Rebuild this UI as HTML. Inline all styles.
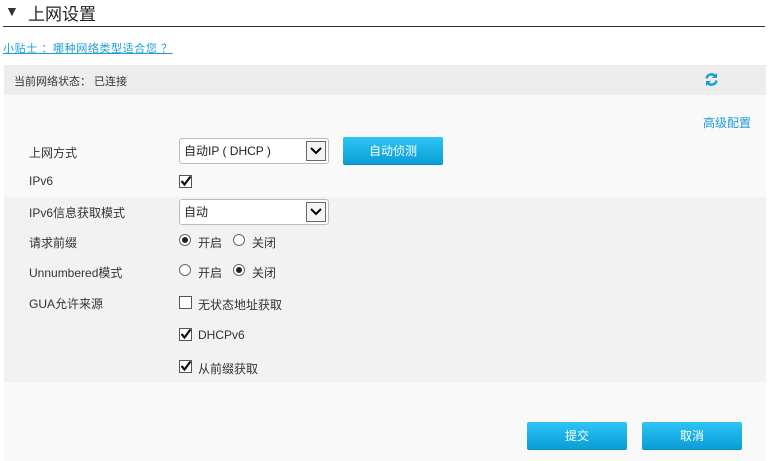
<!DOCTYPE html>
<html><head><meta charset="utf-8"><style>
*{margin:0;padding:0;box-sizing:border-box}
body{width:770px;height:461px;background:#fff;font-family:"Liberation Sans","Noto Sans CJK SC",sans-serif;font-size:12px;color:#333;position:relative;overflow:hidden}
.a{position:absolute;white-space:nowrap}
.sel{position:absolute;height:26px;border:1px solid #bbb;border-radius:3px;background:#fff;padding-left:4px;line-height:24px;font-size:12px;color:#222}
.sel .ar{position:absolute;right:2px;top:2px;width:20px;height:20px;border:1px solid #666;background:#f4f4f4}
.btn{position:absolute;height:28px;width:100px;border-radius:2px;background:linear-gradient(#2ec4f4,#0a9ed6);color:#fff;text-align:center;line-height:28px;font-size:12px;border-bottom:1px solid #0a8fc0}
.cb{position:absolute;width:13px;height:13px;border:1px solid #555;background:#fff}
.rd{position:absolute;width:12px;height:12px;border:1px solid #666;border-radius:50%;background:#fff}
.rd.on::after{content:"";position:absolute;left:2px;top:2px;width:6px;height:6px;border-radius:50%;background:#222}
</style></head><body>
<div class="a" style="left:5px;top:3px;font-size:14px">▼</div>
<div class="a" style="left:28px;top:0px;font-size:17px;color:#222">上网设置</div>
<div class="a" style="left:3px;top:26px;width:762px;height:1px;background:#333"></div>
<div class="a" style="left:3px;top:40px;color:#1a9cd8;text-decoration:underline;font-size:11px;letter-spacing:0.6px">小贴士 ：哪种网络类型适合您 ？</div>
<div class="a" style="left:4px;top:65px;width:762px;height:30px;background:#ededed"></div>
<div class="a" style="left:14px;top:73px;font-size:11px">当前网络状态： 已连接</div>
<svg class="a" style="left:704px;top:72px" width="15" height="15" viewBox="0 0 15 15"><path d="M2.5 6.5A5 5 0 0 1 11.5 4.5" stroke="#1a9cd8" stroke-width="2.4" fill="none"/><path d="M13 1v5H8z" fill="#1a9cd8"/><path d="M12.5 8.5A5 5 0 0 1 3.5 10.5" stroke="#1a9cd8" stroke-width="2.4" fill="none"/><path d="M2 14V9h5z" fill="#1a9cd8"/></svg>
<div class="a" style="left:4px;top:95px;width:762px;height:366px;background:#f9f9f9"></div>
<div class="a" style="left:4px;top:197px;width:762px;height:185px;background:#f2f2f2"></div>
<div class="a" style="left:703px;top:114px;color:#1a9cd8">高级配置</div>
<div class="a" style="left:29px;top:144px">上网方式</div>
<div class="sel" style="left:179px;top:138px;width:150px">自动IP ( DHCP )<div class="ar"><svg width="18" height="18"><path d="M4 6l5 5 5-5" stroke="#000" stroke-width="2" fill="none"/></svg></div></div>
<div class="btn" style="left:343px;top:137px">自动侦测</div>
<div class="a" style="left:29px;top:174px">IPv6</div>
<div class="cb" style="left:179px;top:175px"><svg width="12" height="12" style="position:absolute;left:0;top:-1px"><path d="M1.5 6l3 3.5 6-8" stroke="#111" stroke-width="2.2" fill="none"/></svg></div>
<div class="a" style="left:29px;top:204px">IPv6信息获取模式</div>
<div class="sel" style="left:179px;top:199px;width:150px">自动<div class="ar"><svg width="18" height="18"><path d="M4 6l5 5 5-5" stroke="#000" stroke-width="2" fill="none"/></svg></div></div>
<div class="a" style="left:29px;top:234px">请求前缀</div>
<div class="rd on" style="left:179px;top:234px"></div><div class="a" style="left:198px;top:234px">开启</div>
<div class="rd" style="left:233px;top:234px"></div><div class="a" style="left:252px;top:234px">关闭</div>
<div class="a" style="left:29px;top:264px">Unnumbered模式</div>
<div class="rd" style="left:179px;top:264px"></div><div class="a" style="left:198px;top:264px">开启</div>
<div class="rd on" style="left:233px;top:264px"></div><div class="a" style="left:252px;top:264px">关闭</div>
<div class="a" style="left:29px;top:295px">GUA允许来源</div>
<div class="cb" style="left:179px;top:296px"></div><div class="a" style="left:198px;top:296px">无状态地址获取</div>
<div class="cb" style="left:179px;top:328px"><svg width="12" height="12" style="position:absolute;left:0;top:-1px"><path d="M1.5 6l3 3.5 6-8" stroke="#111" stroke-width="2.2" fill="none"/></svg></div><div class="a" style="left:198px;top:328px">DHCPv6</div>
<div class="cb" style="left:179px;top:360px"><svg width="12" height="12" style="position:absolute;left:0;top:-1px"><path d="M1.5 6l3 3.5 6-8" stroke="#111" stroke-width="2.2" fill="none"/></svg></div><div class="a" style="left:198px;top:360px">从前缀获取</div>
<div class="btn" style="left:527px;top:422px">提交</div>
<div class="btn" style="left:642px;top:422px">取消</div>
</body></html>
